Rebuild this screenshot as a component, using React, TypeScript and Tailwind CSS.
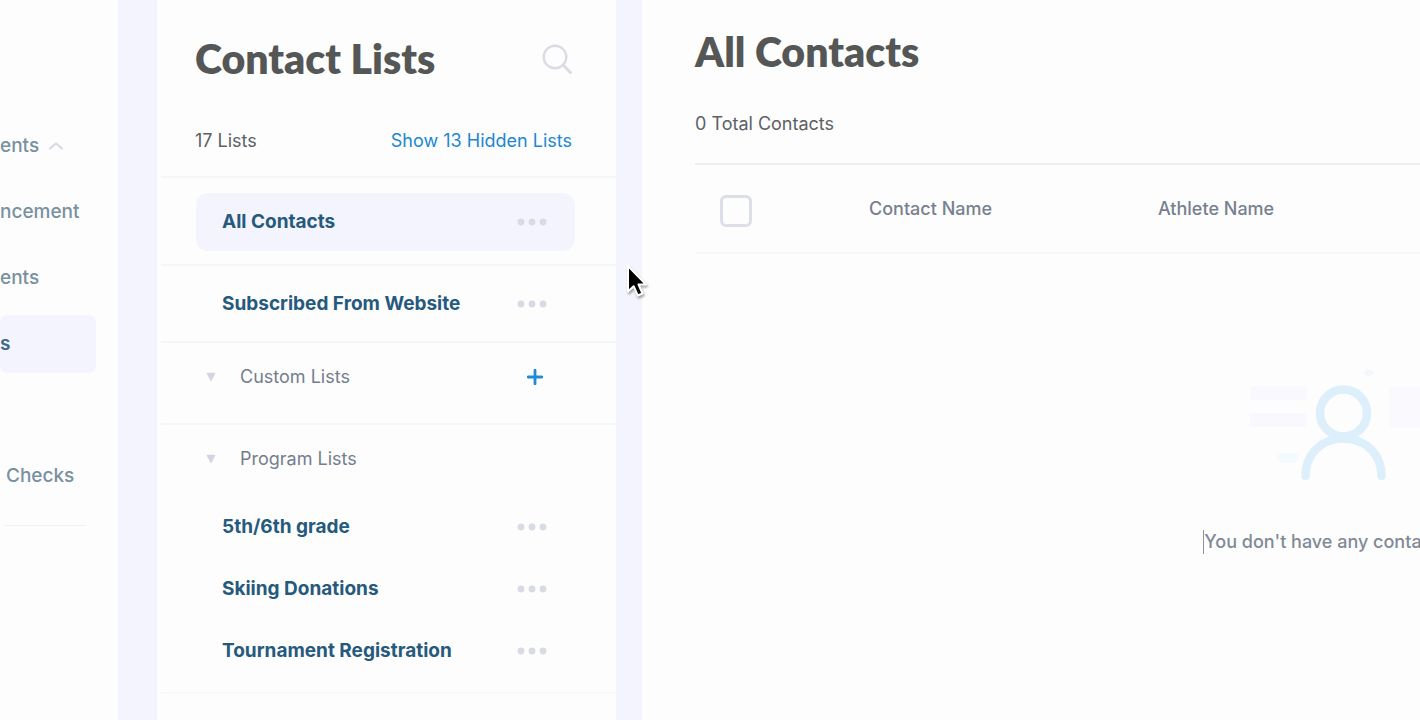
import type { ReactNode } from "react";

const sideLinks = [
  { label: "ents", caret: true },
  { label: "ncement" },
  { label: "ents" },
  { label: "s", active: true },
  { label: "" },
  { label: "Checks", indent: true },
];

function Dots() {
  return (
    <svg className="h-2 w-[30px]" viewBox="0 0 30 8" fill="#d9dbe4" aria-hidden="true">
      <circle cx="4" cy="4" r="3.400" />
      <circle cx="15" cy="4" r="3.400" />
      <circle cx="26" cy="4" r="3.400" />
    </svg>
  );
}

function ListRow({ name, active = false }: { name: string; active?: boolean }) {
  return (
    <div
      className={
        active
          ? "flex h-[58px] items-center justify-between rounded-xl bg-[#f4f4fe] pr-7 pl-[26px]"
          : "flex h-[58px] items-center justify-between pr-7 pl-[26px]"
      }
    >
      <a href="#list" className="text-[19px] leading-6 font-bold text-[#265a7c]">
        {name}
      </a>
      <button type="button" aria-label="List options">
        <Dots />
      </button>
    </div>
  );
}

function GroupHeader({ name, children }: { name: string; children?: ReactNode }) {
  return (
    <div className="flex h-6 items-center justify-between pr-8 pl-[10px]">
      <button type="button" className="flex items-center gap-6 text-lg leading-6 text-[#757d8c]">
        <svg className="h-[10px] w-[10px]" viewBox="0 0 10 10" aria-hidden="true">
          <path
            d="M1.500 1.500h7L5 8.200Z"
            fill="#d3d6e2"
            stroke="#d3d6e2"
            strokeWidth="1.600"
            strokeLinejoin="round"
          />
        </svg>
        {name}
      </button>
      {children}
    </div>
  );
}

function Sidebar() {
  return (
    <nav className="w-[118px] shrink-0 overflow-hidden bg-[#fdfdfe] pt-[117px] text-[19px] leading-6 font-medium text-[#78909f]">
      <ul className="flex flex-col gap-2">
        {sideLinks.map((link, i) => (
          <li key={i} className={link.active ? "h-[58px] pr-[22px]" : "h-[58px]"}>
            {link.label && (
              <a
                href="#section"
                className={
                  link.active
                    ? "flex h-full items-center rounded-lg bg-[#f4f4fe] font-semibold text-[#3f6a84]"
                    : link.indent
                      ? "flex h-full items-center gap-[10px] pl-[6px]"
                      : "flex h-full items-center gap-[10px]"
                }
              >
                {link.label}
                {link.caret && (
                  <svg className="h-2 w-[14px]" viewBox="0 0 14 8" fill="none" aria-hidden="true">
                    <path d="M1 6.500 7 1.500l6 5" stroke="#d5dae1" strokeWidth="2" strokeLinecap="round" />
                  </svg>
                )}
              </a>
            )}
          </li>
        ))}
      </ul>
      <hr className="mt-5 mr-8 ml-1 border-[#f1f2f7]" />
    </nav>
  );
}

function ListsPanel() {
  return (
    <section className="w-[459px] shrink-0 bg-[#fdfdfe]">
      <header className="flex items-center justify-between pt-9 pr-11 pl-[38px]">
        <h1 className="font-[Lato] text-[41px] leading-[46px] font-extrabold text-[#545756]">Contact Lists</h1>
        <button type="button" aria-label="Search lists">
          <svg className="h-[30px] w-[30px]" viewBox="0 0 30 30" fill="none" stroke="#dadce3" strokeWidth="2.400" aria-hidden="true">
            <circle cx="13" cy="13" r="11.300" />
            <path d="m21 21 7.500 7.500" strokeWidth="3" strokeLinecap="round" />
          </svg>
        </button>
      </header>
      <div className="flex items-center justify-between pt-[47px] pr-11 pb-[23px] pl-[38px] text-lg leading-6">
        <span className="text-[#5d6064]">17 Lists</span>
        <button type="button" className="text-[#2088cf]">
          Show 13 Hidden Lists
        </button>
      </div>
      <div className="ml-1">
        <div className="border-t-2 border-[#f5f6f9] pt-[15px] pr-[41px] pb-[13px] pl-[35px]">
          <ListRow name="All Contacts" active />
        </div>
        <div className="border-t-2 border-[#f5f6f9] pt-[9px] pr-[41px] pb-2 pl-[35px]">
          <ListRow name="Subscribed From Website" />
        </div>
        <div className="border-t-2 border-[#f5f6f9] pt-[22px] pr-[41px] pb-[34px] pl-[35px]">
          <GroupHeader name="Custom Lists">
            <button type="button" aria-label="Add custom list">
              <svg className="h-4 w-4" viewBox="0 0 16 16" aria-hidden="true">
                <path d="M8 1.200v13.600M1.200 8h13.600" stroke="#1f8bd2" strokeWidth="2.800" strokeLinecap="round" />
              </svg>
            </button>
          </GroupHeader>
        </div>
        <div className="border-t-2 border-b-2 border-b-[#f9f9fb] border-t-[#f5f6f9] pt-[22px] pr-[41px] pb-3 pl-[35px]">
          <GroupHeader name="Program Lists" />
          <div className="flex flex-col gap-1 pt-[27px]">
            <ListRow name="5th/6th grade" />
            <ListRow name="Skiing Donations" />
            <ListRow name="Tournament Registration" />
          </div>
        </div>
      </div>
    </section>
  );
}

function EmptyArt() {
  return (
    <svg className="h-[116px] w-[190px]" viewBox="0 0 190 116" fill="none" aria-hidden="true">
      <g fill="#f8f8fe">
        <rect x="1" y="17" width="57" height="14" rx="4" />
        <rect x="1" y="44" width="57" height="14" rx="4" />
        <rect x="140" y="17" width="49" height="42" rx="4" fill="#fafafe" />
      </g>
      <rect x="28" y="84" width="22" height="10" rx="5" fill="#f4fbfe" />
      <ellipse cx="120" cy="4" rx="5" ry="3" fill="#f2f7fe" />
      <g stroke="#dceffa" strokeWidth="8.500" strokeLinecap="round">
        <circle cx="94.500" cy="44" r="23.500" />
        <path d="M56.500 107c0-21 15-37.500 38-37.500s38 16.500 38 37.500" />
      </g>
    </svg>
  );
}

function ContactsPanel() {
  return (
    <main className="min-w-0 flex-1 overflow-hidden bg-[#fdfdfe]">
      <div className="ml-[53px] min-w-[1298px] pt-[29px]">
        <h1 className="font-[Lato] text-[41px] leading-[46px] font-extrabold text-[#545756]">All Contacts</h1>
        <p className="pt-[37px] pb-[27px] text-lg leading-6 text-[#5d6064]">0 Total Contacts</p>
        <table className="w-full table-fixed border-y-2 border-t-[#eceef1] border-b-[#f8f8fb] text-left text-lg leading-6 text-[#77808f]">
          <thead>
            <tr className="h-[89px]">
              <th className="w-[174px] pt-1 pl-[25px]">
                <input
                  type="checkbox"
                  aria-label="Select all contacts"
                  className="block h-8 w-8 appearance-none rounded-md border-3 border-[#dcdfe7] bg-[#fdfdfe]"
                />
              </th>
              <th className="w-[289px] font-medium">Contact Name</th>
              <th className="font-medium">Athlete Name</th>
            </tr>
          </thead>
        </table>
        <div className="flex flex-col items-center pt-[115px]">
          <EmptyArt />
          <p className="mt-[45px] border-l border-[#8b949d] text-lg leading-6 font-medium text-[#7f8a95]">
            You don't have any contacts yet.
          </p>
        </div>
      </div>
    </main>
  );
}

export default function App() {
  return (
    <div className="relative flex min-h-screen overflow-hidden bg-[#f4f4fe] font-[Inter,sans-serif]">
      <Sidebar />
      <div className="w-[39px] shrink-0" />
      <ListsPanel />
      <div className="w-[26px] shrink-0" />
      <ContactsPanel />
      <svg
        className="absolute top-[264px] left-[626px] h-9 w-6 drop-shadow-[1px_2px_1px_rgba(0,0,0,0.35)]"
        viewBox="0 0 24 36"
        aria-hidden="true"
      >
        <path
          d="M2 2v25.500l5.700-5.300 4 9.300 4.800-2-4-9h7.500Z"
          fill="#000"
          stroke="#fff"
          strokeWidth="2"
          strokeLinejoin="round"
        />
      </svg>
    </div>
  );
}
